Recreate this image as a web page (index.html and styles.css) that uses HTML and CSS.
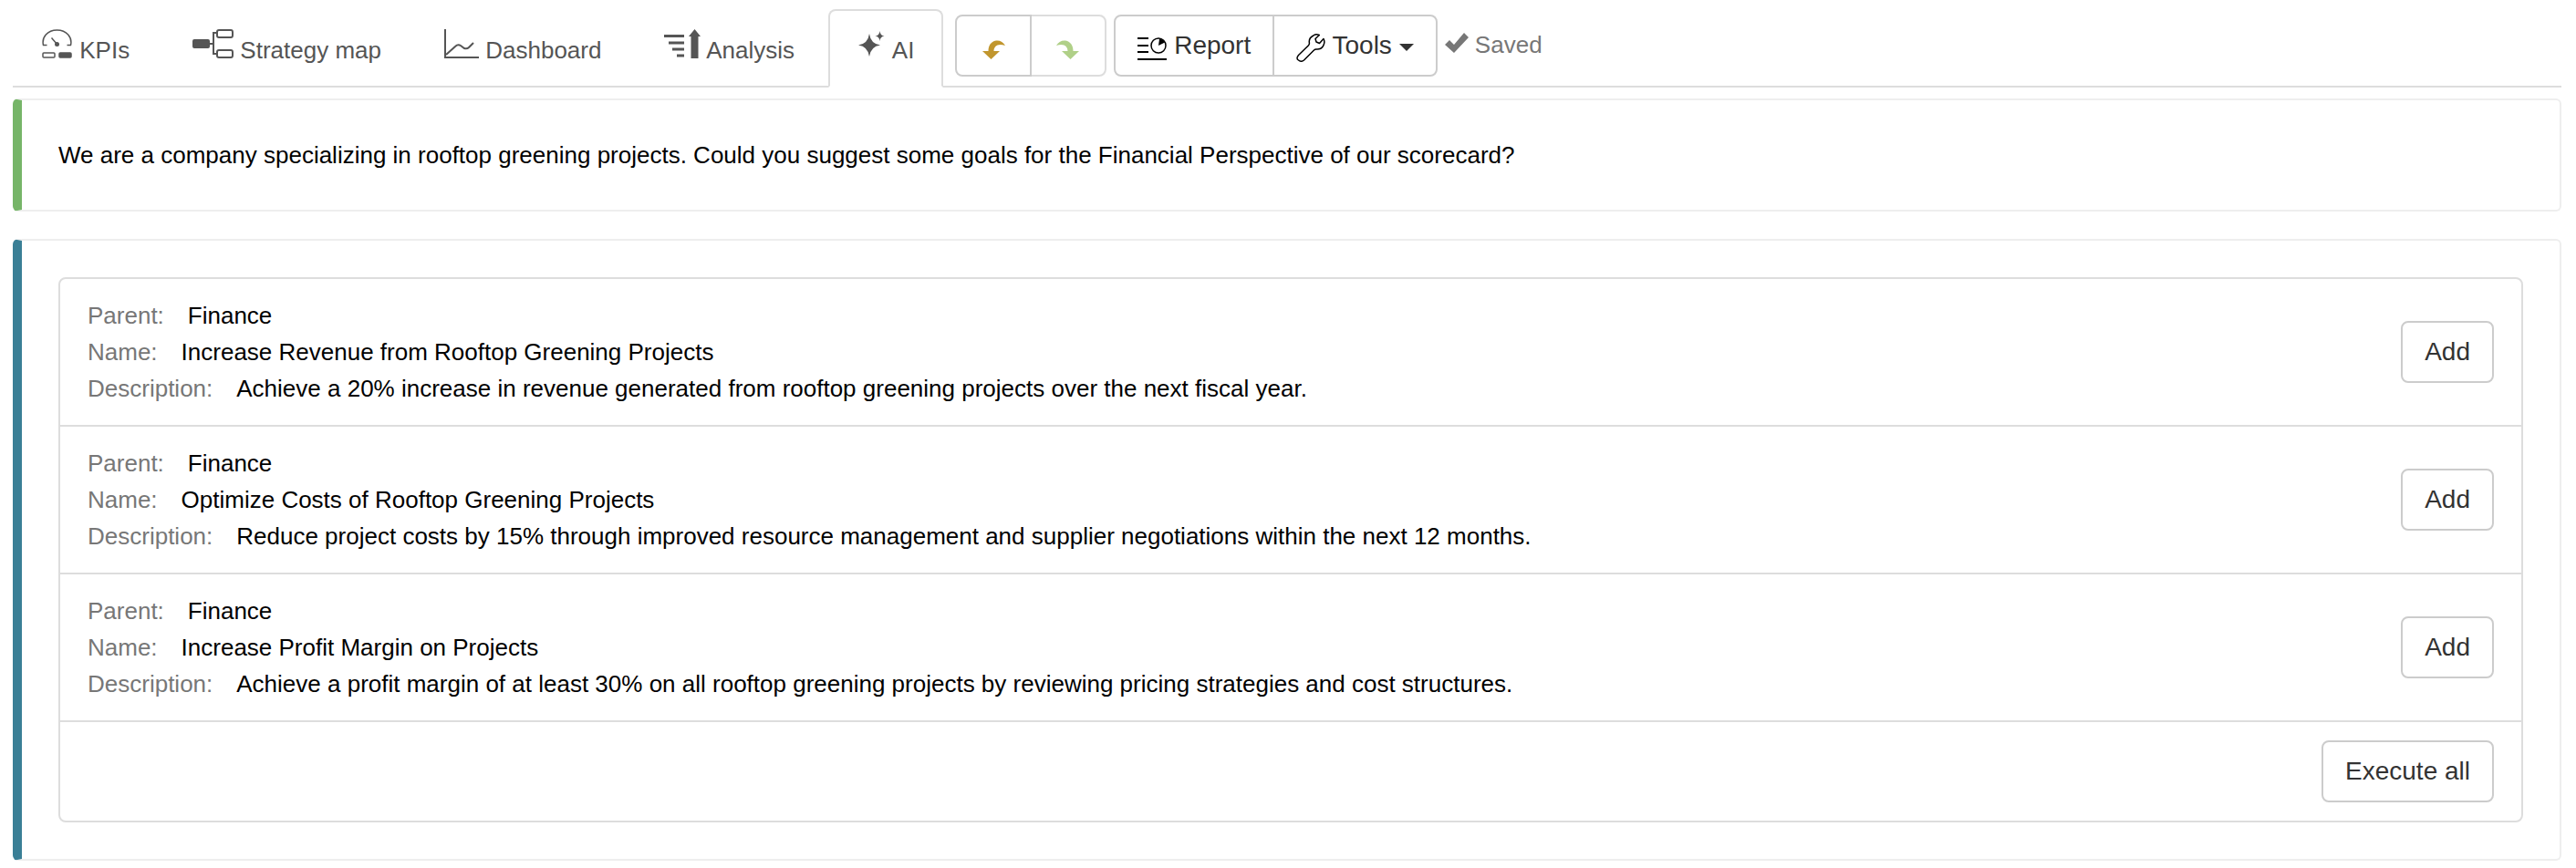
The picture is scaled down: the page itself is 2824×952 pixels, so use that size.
FILE: index.html
```html
<!DOCTYPE html>
<html lang="en">
<head>
  <meta charset="UTF-8">
  <meta name="viewport" content="width=device-width, initial-scale=1.0">
  <title>Scorecard - AI</title>
  <link rel="stylesheet" href="styles.css">
</head>
<body>

<header class="topbar">
  <nav class="tabs">
    <a class="tab" href="#kpis">
      <svg width="34" height="32" viewBox="0 0 34 32" fill="none" stroke="currentColor" stroke-width="1.5">
        <path d="M5.500 17.500H1.500C-.5 9 6 1 16.500 1s17 8 15 16.500h-4"/>
        <path d="M10.500 9.500l6 7"/>
        <circle cx="16.500" cy="16.500" r="2.500" fill="currentColor" stroke="none"/>
        <rect x="1" y="26" width="13" height="5" rx="1"/>
        <rect x="19" y="26" width="13" height="5" rx="1" fill="currentColor"/>
      </svg>
      KPIs
    </a>
    <a class="tab" href="#map">
      <svg width="45" height="32" viewBox="0 0 45 32" fill="none" stroke="currentColor" stroke-width="2">
        <rect x="1" y="12" width="17" height="8" rx="1" fill="currentColor"/>
        <path d="M19 16h4M27 4h-4v23h4"/>
        <rect x="27" y="1" width="17" height="8" rx="2"/>
        <rect x="27" y="23" width="17" height="8" rx="2"/>
      </svg>
      Strategy map
    </a>
    <a class="tab" href="#dashboard">
      <svg width="38" height="32" viewBox="0 0 38 32" fill="none" stroke="currentColor" stroke-width="2">
        <path d="M1 0v31h37"/>
        <path d="M2 28l10-9q3-3 6-1l4 3q3 1 5-1l5-5"/>
      </svg>
      Dashboard
    </a>
    <a class="tab" href="#analysis">
      <svg width="40" height="32" viewBox="0 0 40 32" fill="none" stroke="currentColor" stroke-width="3">
        <path d="M0 7.500h22M5 15h17M9 22h13M14 29h8"/>
        <path d="M33.500 0l6.500 8h-2.500v24h-8V8H27z" fill="currentColor" stroke="none"/>
      </svg>
      Analysis
    </a>
    <a class="tab active" href="#ai">
      <svg width="32" height="32" viewBox="0 0 32 32" fill="currentColor">
        <path d="M13 5q1.500 11 12 12.500q-10.500 1.500-12 12.500q-1.500-11-12-12.500q10.500-1.500 12-12.500z"/>
        <path d="M24.500 2q.5 5 5 5.500q-4.500.5-5 5.500q-.5-5-5-5.500q4.500-.5 5-5.500z"/>
      </svg>
      AI
    </a>
  </nav>

  <div class="toolbar">
    <div class="btn-group">
      <button type="button" class="btn" aria-label="Undo">
        <svg class="icon" viewBox="0 0 32 32" fill="#c1962e">
          <path d="M29 14c-2-4-6-6-10-5.500c-6 1-8.500 6-8.500 11.500H4l9.500 9L23 20h-6.500c0-5 4-9 12.500-6z"/>
        </svg>
      </button>
      <button type="button" class="btn" aria-label="Redo" disabled>
        <svg class="icon" viewBox="0 0 32 32" fill="#86b84a">
          <path d="M3 14c2-4 6-6 10-5.500c6 1 8.500 6 8.500 11.500H28l-9.500 9L9 20h6.500c0-5-4-9-12.500-6z"/>
        </svg>
      </button>
    </div>
    <div class="btn-group">
      <button type="button" class="btn">
        <svg class="icon" viewBox="0 0 32 32" fill="none" stroke="#000" stroke-width="2">
          <path d="M0 6h12M0 14h12M0 21h12M0 29h32"/>
          <circle cx="23" cy="14" r="8" stroke-width="1.5"/>
          <path d="M23 14l1-7.500q4 .5 6 4z" fill="#000" stroke="none"/>
        </svg>
        Report
      </button>
      <button type="button" class="btn">
        <svg class="icon" viewBox="0 0 32 32" fill="none" stroke="#000" stroke-width="1.5" stroke-linejoin="round">
          <path d="M25.300 2.500q-3.500-1.700-6.500 0.500q-5 2.500-4.500 7.500q.5 2-1 3.500L2.500 24.500q-3 3.500 0 5.500q3 2.500 6 0L19.500 19q1.200-1.200 3-1q4.500.3 7-3.500q2.500-4 .5-8l-4.500 5l-3.500-1.500l-1-3.500z"/>
        </svg>
        Tools
        <span class="caret"></span>
      </button>
    </div>
    <span class="saved">
      <svg width="26" height="24" viewBox="0 0 26 24" fill="currentColor">
        <path d="M0 15l5-5l5 5L21 2l5 5L10 24z"/>
      </svg>
      Saved
    </span>
  </div>
</header>

<main>
  <section class="message question">
    <p>We are a company specializing in rooftop greening projects. Could you suggest some goals for the Financial Perspective of our scorecard?</p>
  </section>

  <section class="message answer">
    <ul class="goals">
      <li class="goal">
        <dl>
          <div><dt>Parent:</dt><dd>Finance</dd></div>
          <div><dt>Name:</dt><dd>Increase Revenue from Rooftop Greening Projects</dd></div>
          <div><dt>Description:</dt><dd>Achieve a 20% increase in revenue generated from rooftop greening projects over the next fiscal year.</dd></div>
        </dl>
        <button type="button" class="btn">Add</button>
      </li>
      <li class="goal">
        <dl>
          <div><dt>Parent:</dt><dd>Finance</dd></div>
          <div><dt>Name:</dt><dd>Optimize Costs of Rooftop Greening Projects</dd></div>
          <div><dt>Description:</dt><dd>Reduce project costs by 15% through improved resource management and supplier negotiations within the next 12 months.</dd></div>
        </dl>
        <button type="button" class="btn">Add</button>
      </li>
      <li class="goal">
        <dl>
          <div><dt>Parent:</dt><dd>Finance</dd></div>
          <div><dt>Name:</dt><dd>Increase Profit Margin on Projects</dd></div>
          <div><dt>Description:</dt><dd>Achieve a profit margin of at least 30% on all rooftop greening projects by reviewing pricing strategies and cost structures.</dd></div>
        </dl>
        <button type="button" class="btn">Add</button>
      </li>
      <li class="goal goal-footer">
        <button type="button" class="btn">Execute all</button>
      </li>
    </ul>
  </section>
</main>

</body>
</html>
```
FILE: styles.css
```css
* {
  box-sizing: border-box;
}
body {
  margin: 0;
  padding: 10px 16px 8px 14px;
  background-color: #fff;
  color: #000;
  font-family: "Helvetica Neue", Helvetica, "Liberation Sans", Arial, sans-serif;
  font-size: 26px;
  line-height: 40px;
}
p, ul, dl, dd {
  margin: 0;
  padding: 0;
}

/* Tabs and toolbar */
.topbar {
  display: flex;
  align-items: flex-start;
  gap: 8px;
  margin-bottom: 12px;
  border-bottom: 2px solid #ddd;
}
.tabs {
  display: flex;
  margin-bottom: -2px;
}
.tab {
  height: 86px;
  margin-right: 5px;
  padding: 20px 30px;
  border: 2px solid transparent;
  border-radius: 8px 8px 0 0;
  color: #555;
  line-height: 37px;
  text-decoration: none;
  white-space: nowrap;
}
.tab.active {
  background-color: #fff;
  border-color: #ddd;
  border-bottom-color: #fff;
}
.toolbar {
  display: flex;
  gap: 8px;
  padding-top: 6px;
}
.btn-group {
  display: flex;
}
.btn {
  padding: 12px 24px;
  background-color: #fff;
  border: 2px solid #ccc;
  border-radius: 8px;
  color: #333;
  font-family: inherit;
  font-size: 28px;
  line-height: 40px;
  white-space: nowrap;
  cursor: pointer;
}
.btn:hover {
  background-color: #e6e6e6;
}
.btn:disabled {
  opacity: 0.65;
  cursor: default;
}
.btn-group .btn:first-child {
  position: relative;
  z-index: 1;
  border-radius: 8px 0 0 8px;
}
.btn-group .btn:last-child {
  margin-left: -2px;
  border-radius: 0 8px 8px 0;
}
.icon {
  width: 32px;
  height: 32px;
  vertical-align: middle;
}
.caret {
  display: inline-block;
  border-top: 8px solid #333;
  border-left: 8px solid transparent;
  border-right: 8px solid transparent;
  vertical-align: middle;
}
.saved {
  color: #777;
  white-space: nowrap;
  line-height: 66px;
}
.saved svg {
  vertical-align: baseline;
}

/* Conversation */
.message {
  padding: 40px;
  border: 2px solid #eee;
  border-left-width: 10px;
  border-radius: 6px;
}
.message + .message {
  margin-top: 30px;
}
.question {
  border-left-color: #76b568;
}
.answer {
  border-left-color: #3a7f96;
}
.goals {
  border: 2px solid #ddd;
  border-radius: 8px;
  list-style: none;
}
.goal {
  display: flex;
  align-items: center;
  justify-content: space-between;
  gap: 30px;
  padding: 20px 30px;
}
.goal + .goal {
  border-top: 2px solid #ddd;
}
.goal-footer {
  justify-content: flex-end;
}
.goal dl div {
  display: flex;
  gap: 26px;
}
.goal dt {
  color: #777;
}
```
